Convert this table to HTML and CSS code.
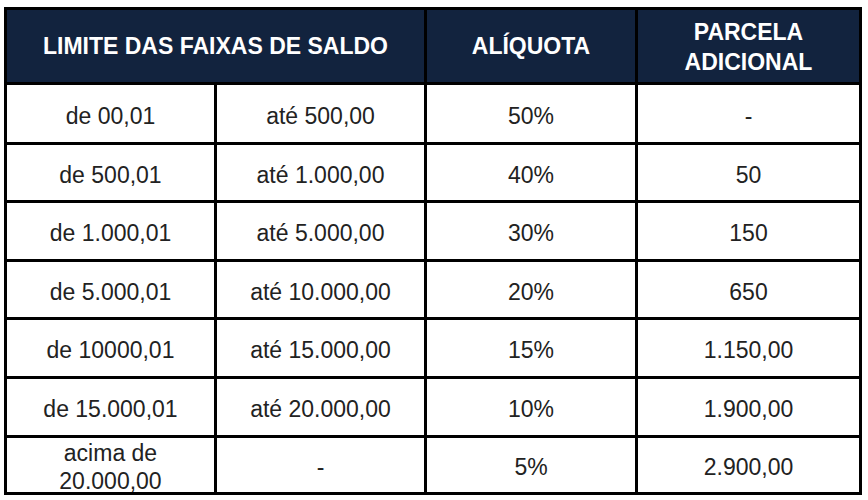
FILE: index.html
```html
<!DOCTYPE html>
<html lang="pt">
<head>
<meta charset="utf-8">
<link rel="stylesheet" href="styles.css">
</head>
<body>
<div class="table">
  <div class="th span2">LIMITE DAS FAIXAS DE SALDO</div>
  <div class="th">ALÍQUOTA</div>
  <div class="th two">PARCELA<br>ADICIONAL</div>

  <div class="td">de 00,01</div><div class="td">até 500,00</div><div class="td">50%</div><div class="td">-</div>
  <div class="td">de 500,01</div><div class="td">até 1.000,00</div><div class="td">40%</div><div class="td">50</div>
  <div class="td">de 1.000,01</div><div class="td">até 5.000,00</div><div class="td">30%</div><div class="td">150</div>
  <div class="td">de 5.000,01</div><div class="td">até 10.000,00</div><div class="td">20%</div><div class="td">650</div>
  <div class="td">de 10000,01</div><div class="td">até 15.000,00</div><div class="td">15%</div><div class="td">1.150,00</div>
  <div class="td">de 15.000,01</div><div class="td">até 20.000,00</div><div class="td">10%</div><div class="td">1.900,00</div>
  <div class="td">acima de<br>20.000,00</div><div class="td">-</div><div class="td">5%</div><div class="td">2.900,00</div>
</div>
</body>
</html>
```
FILE: styles.css
```css
html, body {
  margin: 0;
  padding: 0;
  background: #ffffff;
}
body {
  padding: 7px 0 0 4px;
  font-family: "Liberation Sans", Arial, sans-serif;
}
.table {
  display: grid;
  width: 858px;
  box-sizing: border-box;
  background: #000;
  padding: 3px;
  gap: 3px;
  grid-template-columns: 207px 207px 208px 221px;
  grid-template-rows: 72px 57px 55px 56px 55px 56px 56px 54px;
}
.th {
  background: #12233e;
  color: #ffffff;
  font-weight: bold;
  font-size: 23px;
  display: flex;
  align-items: center;
  justify-content: center;
  text-align: center;
  line-height: 30px;
}
.th.span2 {
  grid-column: span 2;
}
.th.two {
  padding-top: 2px;
}
.td {
  background: #ffffff;
  color: #222;
  font-size: 23px;
  line-height: 28px;
  display: flex;
  align-items: center;
  justify-content: center;
  text-align: center;
  padding-top: 4px;
}
```
